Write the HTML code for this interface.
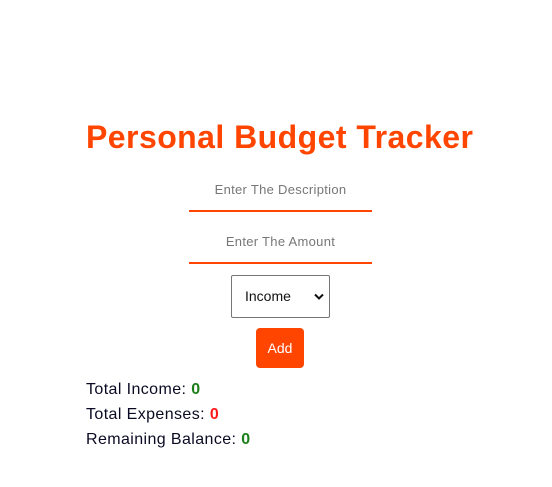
<!DOCTYPE html>
<html><head><style>
body{margin:0;width:552px;height:487px;background:#fff;font-family:"Liberation Sans",sans-serif;position:relative;overflow:hidden}
.a{position:absolute}
h1{position:absolute;left:86px;top:114px;width:388px;margin:0;font-size:32px;font-weight:bold;color:#ff4500;white-space:nowrap;letter-spacing:0.45px;line-height:46px}
.ph{position:absolute;left:189px;width:183px;text-align:center;font-size:13px;color:#777;letter-spacing:0.3px}
.ul{position:absolute;left:189px;width:183px;height:2px;background:#ff4500}
.sel{left:231px;top:275px;width:97px;height:41px;border:1px solid #767676;border-radius:2px;font-size:14px;color:#111}
.btn{left:256px;top:328px;width:48px;height:40px;background:#ff4500;border-radius:4px;color:#fff;font-size:14px;text-align:center;line-height:40px}
.st{position:absolute;left:86px;font-size:16px;color:#0a0a23;letter-spacing:0.4px}
.g{color:#1a7f1a;font-weight:bold}.r{color:#ff1a1a;font-weight:bold}
</style></head><body>
<h1>Personal Budget Tracker</h1>
<div class="ph" style="top:182px">Enter The Description</div>
<div class="ul" style="top:210px"></div>
<div class="ph" style="top:234px">Enter The Amount</div>
<div class="ul" style="top:262px"></div>
<div class="a sel"><span class="a" style="left:13px;top:12px">Income</span>
<svg class="a" style="left:82px;top:17px" width="10" height="8" viewBox="0 0 10 8"><path d="M1 1.5L5 5.5L9 1.5" stroke="#111" stroke-width="2" fill="none"/></svg></div>
<div class="a btn">Add</div>
<div class="st" style="top:381px">Total Income: <span class="g">0</span></div>
<div class="st" style="top:406px">Total Expenses: <span class="r">0</span></div>
<div class="st" style="top:431px">Remaining Balance: <span class="g">0</span></div>
</body></html>
